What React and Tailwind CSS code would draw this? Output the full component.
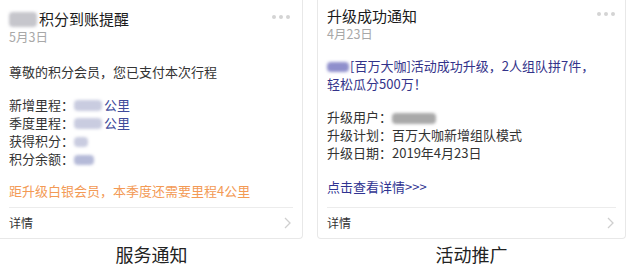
import React from "react";

const font = { fontFamily: '"Noto Sans CJK SC", "Noto Sans", sans-serif' };

function Blur({ className }) {
  return <span className={"inline-block rounded-sm blur-[1.5px] align-middle " + className} />;
}

function Dots() {
  return (
    <div className="flex gap-[3px] pt-[6px]">
      <span className="w-[4px] h-[4px] rounded-full bg-[#d4d4d4]" />
      <span className="w-[4px] h-[4px] rounded-full bg-[#d4d4d4]" />
      <span className="w-[4px] h-[4px] rounded-full bg-[#d4d4d4]" />
    </div>
  );
}

function Footer() {
  return (
    <div className="mt-auto mx-[9px] border-t border-[#ececec] h-[31px] flex items-center justify-between">
      <span className="text-[12px] text-[#333]">详情</span>
      <svg width="7" height="12" viewBox="0 0 7 12" className="mr-[2px]">
        <path d="M1 1l5 5-5 5" fill="none" stroke="#cfcfcf" strokeWidth="1.3" />
      </svg>
    </div>
  );
}

function ServiceCard() {
  return (
    <div className="flex flex-col h-[239px] border-r border-b border-[#e8e8e8] rounded-br-sm">
      <div className="flex justify-between px-[9px] pr-[12px] pt-[9px]">
        <div>
          <div className="flex items-center text-[15px] leading-[20px] text-[#1a1a1a]">
            <Blur className="w-[28px] h-[15px] bg-[#c6c6cc] mr-[2px]" />
            积分到账提醒
          </div>
          <div className="text-[12.5px] leading-[16px] text-[#a8a8a8]">5月3日</div>
        </div>
        <Dots />
      </div>
      <div className="px-[9px] pt-[18px] text-[13px] leading-[18.5px] text-[#333]">
        <div>尊敬的积分会员，您已支付本次行程</div>
        <div className="mt-[14px] leading-[18px]">
          <div>
            新增里程：<Blur className="w-[28px] h-[11px] bg-[#c9cce0] mr-[2px]" />
            <span className="text-[#3e4a9a]">公里</span>
          </div>
          <div>
            季度里程：<Blur className="w-[28px] h-[11px] bg-[#c9cce0] mr-[2px]" />
            <span className="text-[#3e4a9a]">公里</span>
          </div>
          <div>
            获得积分：<Blur className="w-[14px] h-[10px] bg-[#c9cce0]" />
          </div>
          <div>
            积分余额：<Blur className="w-[20px] h-[10px] bg-[#b5bad8]" />
          </div>
        </div>
        <div className="mt-[14px] text-[#f39a55]">距升级白银会员，本季度还需要里程4公里</div>
      </div>
      <Footer />
    </div>
  );
}

function EventCard() {
  return (
    <div className="flex flex-col h-[239px] border-l border-r border-b border-[#e8e8e8] rounded-b-sm">
      <div className="flex justify-between px-[9px] pr-[10px] pt-[6px]">
        <div>
          <div className="flex items-center text-[15px] leading-[20px] text-[#1a1a1a]">升级成功通知</div>
          <div className="text-[12.5px] leading-[16px] text-[#a8a8a8]">4月23日</div>
        </div>
        <Dots />
      </div>
      <div className="px-[9px] pt-[15px] text-[13px] leading-[18px] text-[#333]">
        <div className="text-[#33338a]">
          <div>
            <Blur className="w-[22px] h-[10px] bg-[#8f8fcc] mr-[1px]" />
            [百万大咖]活动成功升级，2人组队拼7件，
          </div>
          <div>轻松瓜分500万！</div>
        </div>
        <div className="mt-[15px]">
          升级用户：<Blur className="w-[44px] h-[11px] bg-[#a9a9a9]" />
        </div>
        <div>升级计划：百万大咖新增组队模式</div>
        <div>升级日期：2019年4月23日</div>
        <div className="mt-[16px] text-[#2f3391]">点击查看详情&gt;&gt;&gt;</div>
      </div>
      <Footer />
    </div>
  );
}

export default function App() {
  return (
    <div className="w-[627px] h-[269px] bg-white overflow-hidden" style={font}>
      <div className="flex gap-[14px] pr-[1px]">
        <div className="w-[303px] flex flex-col">
          <ServiceCard />
          <div className="text-center text-[18px] leading-[30px] text-[#222]">服务通知</div>
        </div>
        <div className="flex-1 flex flex-col">
          <EventCard />
          <div className="text-center text-[18px] leading-[30px] text-[#222]">活动推广</div>
        </div>
      </div>
    </div>
  );
}
